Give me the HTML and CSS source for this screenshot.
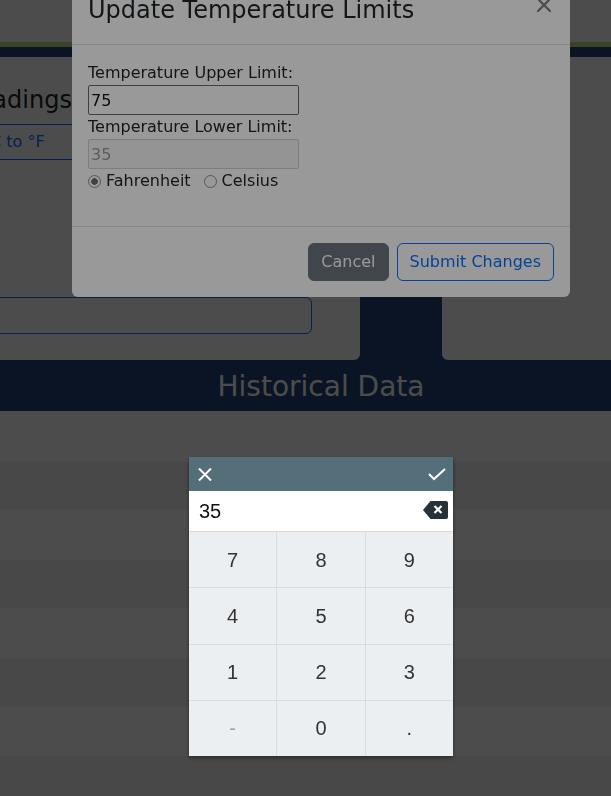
FILE: index.html
```html
<!DOCTYPE html>
<html lang="en">
<head>
<meta charset="utf-8">
<title>Temperature Monitor</title>
<link rel="stylesheet" href="styles.css">
</head>
<body>
<div class="page">
  <header class="topbar"></header>
  <div class="accent"></div>
  <main class="dashboard">
    <div class="cards">
      <section class="card card-readings">
        <h4 class="card-title">Readings</h4>
        <button class="btn-outline unit-toggle" type="button">°C to °F</button>
        <input class="form-control reading-input" type="text">
      </section>
      <section class="card card-side"></section>
    </div>
    <h2 class="section-title">Historical Data</h2>
  </main>
  <div class="history">
    <div class="history-head"></div>
    <div class="history-row"></div>
    <div class="history-row"></div>
    <div class="history-row"></div>
    <div class="history-row"></div>
    <div class="history-row"></div>
    <div class="history-row"></div>
    <div class="history-row"></div>
  </div>
</div>

<div class="modal-backdrop"></div>
<div class="modal">
  <div class="modal-header">
    <h4 class="modal-title">Update Temperature Limits</h4>
    <button class="btn-close" type="button" aria-label="Close">
      <svg width="14" height="14" viewBox="0 0 14 14"><path d="M1 1L13 13M13 1L1 13" stroke="#000" stroke-width="2.2" stroke-linecap="square"/></svg>
    </button>
  </div>
  <div class="modal-body">
    <form class="limits-form">
      <label class="field-label">Temperature Upper Limit:</label>
      <input class="limit-input" type="text" value="75">
      <label class="field-label">Temperature Lower Limit:</label>
      <input class="limit-input" type="text" value="35" disabled>
      <div class="unit-row">
        <label class="unit-option"><input class="unit-radio" type="radio" name="unit" checked> Fahrenheit</label>
        <label class="unit-option"><input class="unit-radio" type="radio" name="unit"> Celsius</label>
      </div>
    </form>
  </div>
  <div class="modal-footer">
    <button class="btn btn-secondary" type="button">Cancel</button>
    <button class="btn btn-outline-primary" type="button">Submit Changes</button>
  </div>
</div>

<div class="keypad-backdrop"></div>
<div class="keypad">
  <div class="keypad-header">
    <svg width="14" height="13" viewBox="0 0 14 13"><path d="M1 0.5L13 12.5M13 0.5L1 12.5" stroke="#fff" stroke-width="2"/></svg>
    <svg width="18" height="13" viewBox="0 0 18 13"><path d="M1 6L6 11L17 1" fill="none" stroke="#fff" stroke-width="2"/></svg>
  </div>
  <div class="keypad-display">
    <span class="keypad-value">35</span>
    <svg class="backspace" width="25" height="18" viewBox="0 0 25 18"><path d="M7.5 0H23Q25 0 25 2V16Q25 18 23 18H7.5L0 9Z" fill="#263238"/><path d="M11.5 5L18.5 12M18.5 5L11.5 12" stroke="#fff" stroke-width="2.2"/></svg>
  </div>
  <div class="keypad-keys">
    <div class="key">7</div><div class="key">8</div><div class="key">9</div>
    <div class="key">4</div><div class="key">5</div><div class="key">6</div>
    <div class="key">1</div><div class="key">2</div><div class="key">3</div>
    <div class="key key-disabled">-</div><div class="key">0</div><div class="key">.</div>
  </div>
</div>
</body>
</html>
```
FILE: styles.css
```css
* { box-sizing: border-box; }

html, body {
  margin: 0;
  height: 100%;
}

body {
  font-family: "DejaVu Sans", sans-serif;
  font-size: 16px;
  line-height: 1.5;
  color: #212529;
  background: #fff;
  overflow: hidden;
}

/* ---------- page behind the dialogs ---------- */
.topbar {
  height: 42px;
  background: #fff;
}

.accent {
  height: 5px;
  background: #c6e084;
}

.dashboard {
  background: #234579;
  padding-top: 10px;
}

.cards {
  display: flex;
  gap: 82px;
  height: 303px;
}

.card {
  background: #fff;
  border-radius: 0 0 6px 6px;
}

.card-readings {
  flex: 0 0 407px;
  margin-left: -47px;
  padding: 16px;
  display: flex;
  flex-direction: column;
  align-items: flex-start;
}

.card-side {
  flex: 0 0 240px;
}

.card-title {
  margin: 13px 0 9px -7px;
  font-size: 24px;
  font-weight: 400;
  line-height: 1.2;
}

.btn-outline {
  font: inherit;
  height: 36px;
  width: 300px;
  padding: 5px 12px;
  text-align: left;
  color: #0d6efd;
  background: transparent;
  border: 1px solid #0d6efd;
  border-radius: 6px;
}

.reading-input {
  margin-top: 137px;
  width: 343px;
  height: 37px;
  border: 1px solid #0d6efd;
  border-radius: 6px;
  font: inherit;
}

.section-title {
  margin: 0;
  height: 51px;
  padding: 2px 0 0 31px;
  font-size: 28px;
  font-weight: 400;
  line-height: 49px;
  text-align: center;
  color: #fff;
}

.history-head {
  height: 51px;
  background: #fff;
}

.history-row {
  height: 48px;
  background: #f2f2f2;
}

.history-row:nth-child(odd) {
  height: 50px;
  background: #fff;
}

/* ---------- modal ---------- */
.modal-backdrop,
.keypad-backdrop {
  position: fixed;
  inset: 0;
}

.modal-backdrop { background: rgba(0, 0, 0, 0.5); }
.keypad-backdrop { background: rgba(0, 0, 0, 0.4); }

.modal {
  position: fixed;
  top: -24px;
  left: 72px;
  width: 498px;
  background: #fff;
  border-radius: 6px;
}

.modal-header {
  display: flex;
  align-items: flex-start;
  padding: 16px;
  border-bottom: 1px solid #dee2e6;
}

.modal-title {
  margin: 0;
  font-size: 24px;
  font-weight: 400;
  line-height: 36px;
}

.btn-close {
  margin: 6px 3px 0 auto;
  padding: 0;
  border: 0;
  background: transparent;
  opacity: 0.5;
  line-height: 0;
}

.modal-body {
  padding: 16px;
}

.limits-form {
  margin: 0 0 17px;
}

.field-label {
  display: block;
  height: 24px;
}

.limit-input {
  display: block;
  width: 211px;
  height: 30px;
  margin: 0;
  padding: 1px 2px;
  font: inherit;
  color: #111;
  background: #fff;
  border: 1px solid #6a6a6a;
  border-radius: 2px;
}

.limit-input:disabled {
  color: #9a9a9a;
  background: #f7f7f7;
  border-color: #d0d0d0;
}

.unit-row {
  display: flex;
  gap: 13px;
  height: 24px;
  align-items: center;
}

.unit-option {
  display: flex;
  align-items: center;
  gap: 5px;
}

.unit-radio {
  appearance: none;
  width: 13px;
  height: 13px;
  margin: 0;
  border: 1px solid #8e8e8e;
  border-radius: 50%;
  background: #fff;
}

.unit-radio:checked {
  background: radial-gradient(circle, #6e6e6e 0 3px, #fff 3.6px);
}

.modal-footer {
  display: flex;
  justify-content: flex-end;
  padding: 12px;
  border-top: 1px solid #dee2e6;
}

.btn {
  margin: 4px;
  height: 38px;
  padding: 6px 12px;
  font: inherit;
  border: 1px solid transparent;
  border-radius: 6px;
}

.btn-secondary {
  color: #fff;
  background: #6c757d;
  border-color: #6c757d;
}

.btn-outline-primary {
  color: #0d6efd;
  background: transparent;
  border-color: #0d6efd;
}

/* ---------- numeric keypad ---------- */
.keypad {
  position: fixed;
  top: 457px;
  left: 189px;
  width: 264px;
  background: #fff;
  box-shadow: 0 2px 4px rgba(0, 0, 0, 0.45);
  font-family: "Liberation Sans", Arial, sans-serif;
}

.keypad-header {
  height: 34px;
  display: flex;
  align-items: center;
  justify-content: space-between;
  padding: 0 7px 0 9px;
  background: #546e7a;
}

.keypad-display {
  height: 41px;
  display: flex;
  align-items: center;
  justify-content: space-between;
  padding: 0 5px 0 10px;
  border-bottom: 1px solid #dcdcdc;
}

.keypad-value {
  font-size: 20px;
  line-height: 40px;
  color: #111;
}

.backspace {
  margin-top: -2px;
}

.keypad-keys {
  display: grid;
  grid-template-columns: repeat(3, 1fr);
  grid-template-rows: repeat(4, 1fr);
  gap: 1px;
  height: 224px;
  background: #d9dcde;
}

.key {
  display: flex;
  align-items: center;
  justify-content: center;
  background: #eceff1;
  font-size: 20px;
  color: #333;
}

.key-disabled {
  color: #a0a0a0;
}
```
